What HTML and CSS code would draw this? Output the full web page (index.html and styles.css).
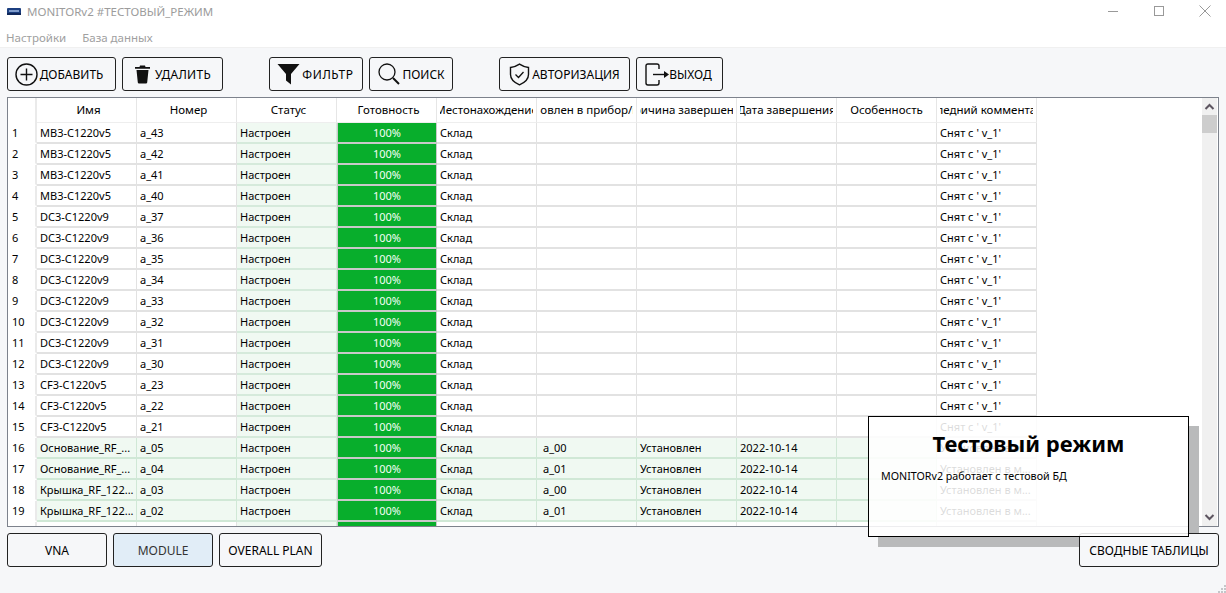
FILE: index.html
```html
<!DOCTYPE html>
<html lang="ru">
<head>
  <meta charset="UTF-8" />
  <title>MONITORv2 #ТЕСТОВЫЙ_РЕЖИМ</title>
  <link rel="stylesheet" href="styles.css">
</head>
<body>
  <div class="titlebar">
    <svg class="app-icon" width="14" height="7" viewBox="0 0 14 7"><rect x="0" y="0" width="14" height="7" rx="1" fill="#1c3f80"/><rect x="2" y="2" width="10" height="2" fill="#7f9ccc"/><rect x="0" y="5" width="14" height="2" fill="#10285a"/></svg>
    <span class="title">MONITORv2 #ТЕСТОВЫЙ_РЕЖИМ</span>
    <div class="caption">
      <div class="caption-btn"><svg width="12" height="12" viewBox="0 0 12 12"><path d="M1 6.5h10" stroke="#999" fill="none"/></svg></div>
      <div class="caption-btn"><svg width="12" height="12" viewBox="0 0 12 12"><rect x="1.5" y="1.5" width="9" height="9" stroke="#999" fill="none"/></svg></div>
      <div class="caption-btn"><svg width="12" height="12" viewBox="0 0 12 12"><path d="M.5.5l11 11M11.500.5l-11 11" stroke="#999" fill="none"/></svg></div>
    </div>
  </div>
  <div class="menu"><span>Настройки</span><span>База данных</span></div>

  <div class="toolbar">
    <button class="btn w-add"><svg width="23" height="23" viewBox="0 0 23 23"><circle cx="11.500" cy="11.500" r="10.500" fill="none" stroke="#111" stroke-width="1.400"/><path d="M11.500 5.500v12M5.500 11.500h12" stroke="#111" stroke-width="1.400"/></svg>ДОБАВИТЬ</button>
    <button class="btn w-del"><svg width="17" height="20" viewBox="0 0 17 20"><path d="M6 1.500h5l.5 1.500H16v1.800H1V3h4.500z" fill="#111"/><path d="M2.500 6h12l-1.300 12.500q-.1 1-1.200 1H5q-1.100 0-1.200-1z" fill="#111"/></svg>УДАЛИТЬ</button>
    <button class="btn w-filter group"><svg width="23" height="22" viewBox="0 0 23 22"><path d="M.5 1h22l-8.500 10v10.500l-5-4V11z" fill="#111"/></svg>ФИЛЬТР</button>
    <button class="btn w-search"><svg width="24" height="24" viewBox="0 0 24 24"><circle cx="10" cy="10" r="8" fill="none" stroke="#111" stroke-width="1.300"/><path d="M16 16l6 6" stroke="#111" stroke-width="2"/></svg>ПОИСК</button>
    <button class="btn w-auth group"><svg width="21" height="23" viewBox="0 0 21 23"><path d="M10.500 1.200q4.500 3 9 3.300v7q0 6.500-9 10.300-9-3.800-9-10.300v-7q4.500-.3 9-3.300z" fill="none" stroke="#111" stroke-width="1.400"/><path d="M6.500 11.500l3 3 5-5.500" fill="none" stroke="#111" stroke-width="1.300"/></svg>АВТОРИЗАЦИЯ</button>
    <button class="btn w-exit"><svg width="24" height="23" viewBox="0 0 24 23"><path d="M14 6V3q0-2-2-2H3Q1 1 1 3v17q0 2 2 2h9q2 0 2-2v-3" fill="none" stroke="#111" stroke-width="1.400"/><path d="M8 11.500h12" stroke="#111" stroke-width="1.400"/><path d="M24 11.500l-5-3.500v7z" fill="#111"/></svg>ВЫХОД</button>
  </div>

  <div class="frame">
    <div class="table-wrap">
      <table class="grid">
        <colgroup><col class="c-num"><col span="10" class="c-col"></colgroup>
        <thead>
          <tr><th class="num"></th><th class="sh"><span>Имя</span></th><th class="sh"><span>Номер</span></th><th class="sh"><span>Статус</span></th><th class="sh"><span>Готовность</span></th><th><span>Местонахождение</span></th><th><span>Установлен в прибор/плату</span></th><th><span>Причина завершения</span></th><th><span>Дата завершения</span></th><th><span>Особенность</span></th><th><span>Последний комментарий</span></th></tr>
        </thead>
        <tbody>
          <tr><td class="num">1</td><td>MB3-C1220v5</td><td>a_43</td><td class="st">Настроен</td><td class="pg">100%</td><td>Склад</td><td></td><td></td><td></td><td></td><td>Снят с ' v_1'</td></tr>
          <tr><td class="num">2</td><td>MB3-C1220v5</td><td>a_42</td><td class="st">Настроен</td><td class="pg">100%</td><td>Склад</td><td></td><td></td><td></td><td></td><td>Снят с ' v_1'</td></tr>
          <tr><td class="num">3</td><td>MB3-C1220v5</td><td>a_41</td><td class="st">Настроен</td><td class="pg">100%</td><td>Склад</td><td></td><td></td><td></td><td></td><td>Снят с ' v_1'</td></tr>
          <tr><td class="num">4</td><td>MB3-C1220v5</td><td>a_40</td><td class="st">Настроен</td><td class="pg">100%</td><td>Склад</td><td></td><td></td><td></td><td></td><td>Снят с ' v_1'</td></tr>
          <tr><td class="num">5</td><td>DC3-C1220v9</td><td>a_37</td><td class="st">Настроен</td><td class="pg">100%</td><td>Склад</td><td></td><td></td><td></td><td></td><td>Снят с ' v_1'</td></tr>
          <tr><td class="num">6</td><td>DC3-C1220v9</td><td>a_36</td><td class="st">Настроен</td><td class="pg">100%</td><td>Склад</td><td></td><td></td><td></td><td></td><td>Снят с ' v_1'</td></tr>
          <tr><td class="num">7</td><td>DC3-C1220v9</td><td>a_35</td><td class="st">Настроен</td><td class="pg">100%</td><td>Склад</td><td></td><td></td><td></td><td></td><td>Снят с ' v_1'</td></tr>
          <tr><td class="num">8</td><td>DC3-C1220v9</td><td>a_34</td><td class="st">Настроен</td><td class="pg">100%</td><td>Склад</td><td></td><td></td><td></td><td></td><td>Снят с ' v_1'</td></tr>
          <tr><td class="num">9</td><td>DC3-C1220v9</td><td>a_33</td><td class="st">Настроен</td><td class="pg">100%</td><td>Склад</td><td></td><td></td><td></td><td></td><td>Снят с ' v_1'</td></tr>
          <tr><td class="num">10</td><td>DC3-C1220v9</td><td>a_32</td><td class="st">Настроен</td><td class="pg">100%</td><td>Склад</td><td></td><td></td><td></td><td></td><td>Снят с ' v_1'</td></tr>
          <tr><td class="num">11</td><td>DC3-C1220v9</td><td>a_31</td><td class="st">Настроен</td><td class="pg">100%</td><td>Склад</td><td></td><td></td><td></td><td></td><td>Снят с ' v_1'</td></tr>
          <tr><td class="num">12</td><td>DC3-C1220v9</td><td>a_30</td><td class="st">Настроен</td><td class="pg">100%</td><td>Склад</td><td></td><td></td><td></td><td></td><td>Снят с ' v_1'</td></tr>
          <tr><td class="num">13</td><td>CF3-C1220v5</td><td>a_23</td><td class="st">Настроен</td><td class="pg">100%</td><td>Склад</td><td></td><td></td><td></td><td></td><td>Снят с ' v_1'</td></tr>
          <tr><td class="num">14</td><td>CF3-C1220v5</td><td>a_22</td><td class="st">Настроен</td><td class="pg">100%</td><td>Склад</td><td></td><td></td><td></td><td></td><td>Снят с ' v_1'</td></tr>
          <tr><td class="num">15</td><td>CF3-C1220v5</td><td>a_21</td><td class="st">Настроен</td><td class="pg">100%</td><td>Склад</td><td></td><td></td><td></td><td></td><td>Снят с ' v_1'</td></tr>
          <tr class="done"><td class="num">16</td><td>Основание_RF_...</td><td>a_05</td><td class="st">Настроен</td><td class="pg">100%</td><td>Склад</td><td class="inst">a_00</td><td>Установлен</td><td>2022-10-14</td><td></td><td class="plain">Установлен в м...</td></tr>
          <tr class="done"><td class="num">17</td><td>Основание_RF_...</td><td>a_04</td><td class="st">Настроен</td><td class="pg">100%</td><td>Склад</td><td class="inst">a_01</td><td>Установлен</td><td>2022-10-14</td><td></td><td class="plain">Установлен в м...</td></tr>
          <tr class="done"><td class="num">18</td><td>Крышка_RF_122...</td><td>a_03</td><td class="st">Настроен</td><td class="pg">100%</td><td>Склад</td><td class="inst">a_00</td><td>Установлен</td><td>2022-10-14</td><td></td><td class="plain">Установлен в м...</td></tr>
          <tr class="done"><td class="num">19</td><td>Крышка_RF_122...</td><td>a_02</td><td class="st">Настроен</td><td class="pg">100%</td><td>Склад</td><td class="inst">a_01</td><td>Установлен</td><td>2022-10-14</td><td></td><td class="plain">Установлен в м...</td></tr>
          <tr><td class="num"></td><td></td><td></td><td class="st"></td><td class="pg"></td><td></td><td></td><td></td><td></td><td></td><td></td></tr>
        </tbody>
      </table>
    </div>
    <div class="scrollbar">
      <svg class="arrow" width="15" height="17" viewBox="0 0 15 17"><path d="M3.500 11l4-4 4 4" fill="none" stroke="#5d5560" stroke-width="2"/></svg>
      <div class="thumb"></div>
      <div class="track"></div>
      <svg class="arrow" width="15" height="17" viewBox="0 0 15 17"><path d="M3.500 6l4 4 4-4" fill="none" stroke="#5d5560" stroke-width="2"/></svg>
    </div>
  </div>

  <div class="bottombar">
    <button class="btn tab">VNA</button>
    <button class="btn tab active">MODULE</button>
    <button class="btn tab-plan">OVERALL PLAN</button>
    <button class="btn tab-summary">СВОДНЫЕ ТАБЛИЦЫ</button>
  </div>

  <div class="notice-shadow"></div>
  <div class="notice">
    <h2>Тестовый режим</h2>
    <p>MONITORv2 работает с тестовой БД</p>
  </div>

  <svg class="grip" width="8" height="8" viewBox="0 0 8 8"><path d="M6 0h2v2H6zM3 3h2v2H3zM6 3h2v2H6zM0 6h2v2H0zM3 6h2v2H3zM6 6h2v2H6z" fill="#c4c6c9"/></svg>
</body>
</html>
```

FILE: styles.css
```css
html, body { height: 100%; }
body { margin: 0; background: #f6f7f9; color: #000; font-family: "Noto Sans", sans-serif; font-size: 11px; overflow: hidden; position: relative; }

.titlebar { height: 31px; background: #fff; display: flex; align-items: center; padding-left: 7px; overflow: hidden; }
.app-icon { margin-right: 6px; margin-top: -8px; }
.title { color: #9c9c9c; font-size: 11.500px; margin-top: -8px; }
.caption { margin-left: auto; margin-right: -2px; display: flex; margin-top: -10px; }
.caption-btn { width: 46px; display: flex; justify-content: center; }

.menu { height: 16px; background: #fff; color: #a0a0a0; font-size: 11.500px; padding-left: 6px; display: flex; gap: 16px; line-height: 14px; border-bottom: 1px solid #f0f0f0; }

.toolbar { display: flex; gap: 6px; padding: 9px 7px 6px; }
.btn { height: 34px; padding: 0; border: 1px solid #222; border-radius: 3px; background: #f6f7f9; color: #000; font-family: inherit; font-size: 12px; display: flex; align-items: center; justify-content: center; gap: 1px; }
.group { margin-left: 40px; }
.w-add { width: 109px; gap: 2px; padding-right: 5px; }
.w-del { width: 101px; gap: 4px; letter-spacing: .3px; }
.w-filter { width: 94px; gap: 2px; letter-spacing: .6px; padding-right: 1px; }
.w-search { width: 84px; gap: 1px; }
.w-auth { width: 131px; gap: 2px; }
.w-exit { width: 87px; gap: 0; padding-right: 2px; }

.frame { height: 430px; box-sizing: border-box; margin: 0 7px; border: 1px solid #7d828c; background: #fff; display: flex; }
.table-wrap { flex: 1; overflow: hidden; }
.grid { border-collapse: separate; border-spacing: 0; table-layout: fixed; width: 1029px; }
.c-num { width: 29px; }
.c-col { width: 100px; }
.grid th { height: 25px; box-sizing: border-box; padding: 0 3px 2px; font-weight: 400; font-size: 11.500px; border-right: 1px solid #e6e6e6; border-bottom: 1px solid #eee; overflow: hidden; }
.grid th span { display: flex; justify-content: center; white-space: nowrap; overflow: hidden; }
.grid th.sh span { padding-left: 4px; }
.grid td { height: 21px; box-sizing: border-box; padding: 0 3px; white-space: nowrap; overflow: hidden; border-right: 1px solid #e2e2e2; border-bottom: 2px solid #e2e2e2; }
.grid .num { padding-left: 4px; background: #fff; border-bottom-color: #fff; border-right: 2px solid #eaeaea; }
.grid th.num { border-bottom: 0; }
.grid td.st { background: #f0f9f2; border-color: #d5eadb; }
.grid td.pg { background: #08ae2c; color: #f4fff6; text-align: center; padding: 0; border: 1px solid #c9c9c9; border-top: 0; border-bottom-width: 2px; }
.grid td.inst { padding-left: 6px; }
.done td { background: #f0f9f2; border-color: #d0e8d6; }
.grid .done td.num { background: #fff; border-color: #eaeaea; border-bottom-color: #fff; }
.grid .done td.plain { background: #fff; border-color: #e2e2e2; }

.scrollbar { width: 15px; margin-left: auto; background: #f0f0f0; display: flex; flex-direction: column; margin-right: 1px; }
.arrow { flex: none; }
.thumb { height: 18px; background: #cdcdcd; }
.track { flex: 1; }

.bottombar { display: flex; gap: 6px; padding: 6px 7px 0; }
.tab { width: 100px; }
.tab.active { background: #e1edf7; color: #333; }
.tab-plan { width: 103px; }
.tab-summary { width: 140px; margin-left: auto; position: relative; z-index: 2; }

/* L-shaped so it does not show through the translucent notice */
.notice-shadow { position: absolute; left: 878px; top: 426px; width: 321px; height: 121px; background: #b9babb; z-index: 1; clip-path: polygon(311px 0, 100% 0, 100% 100%, 0 100%, 0 111px, 311px 111px); }
.notice { position: absolute; left: 868px; top: 416px; width: 321px; height: 121px; box-sizing: border-box; border: 1px solid #000; background: rgba(255, 255, 255, 0.86); z-index: 3; padding: 0 12px; }
.notice h2 { margin: 11px 0 0; font-size: 22px; line-height: 30px; font-weight: 700; text-align: center; }
.notice p { margin: 11px 0 0; font-size: 10.700px; line-height: 15px; }

.grip { position: absolute; right: 0; bottom: 0; }
```
